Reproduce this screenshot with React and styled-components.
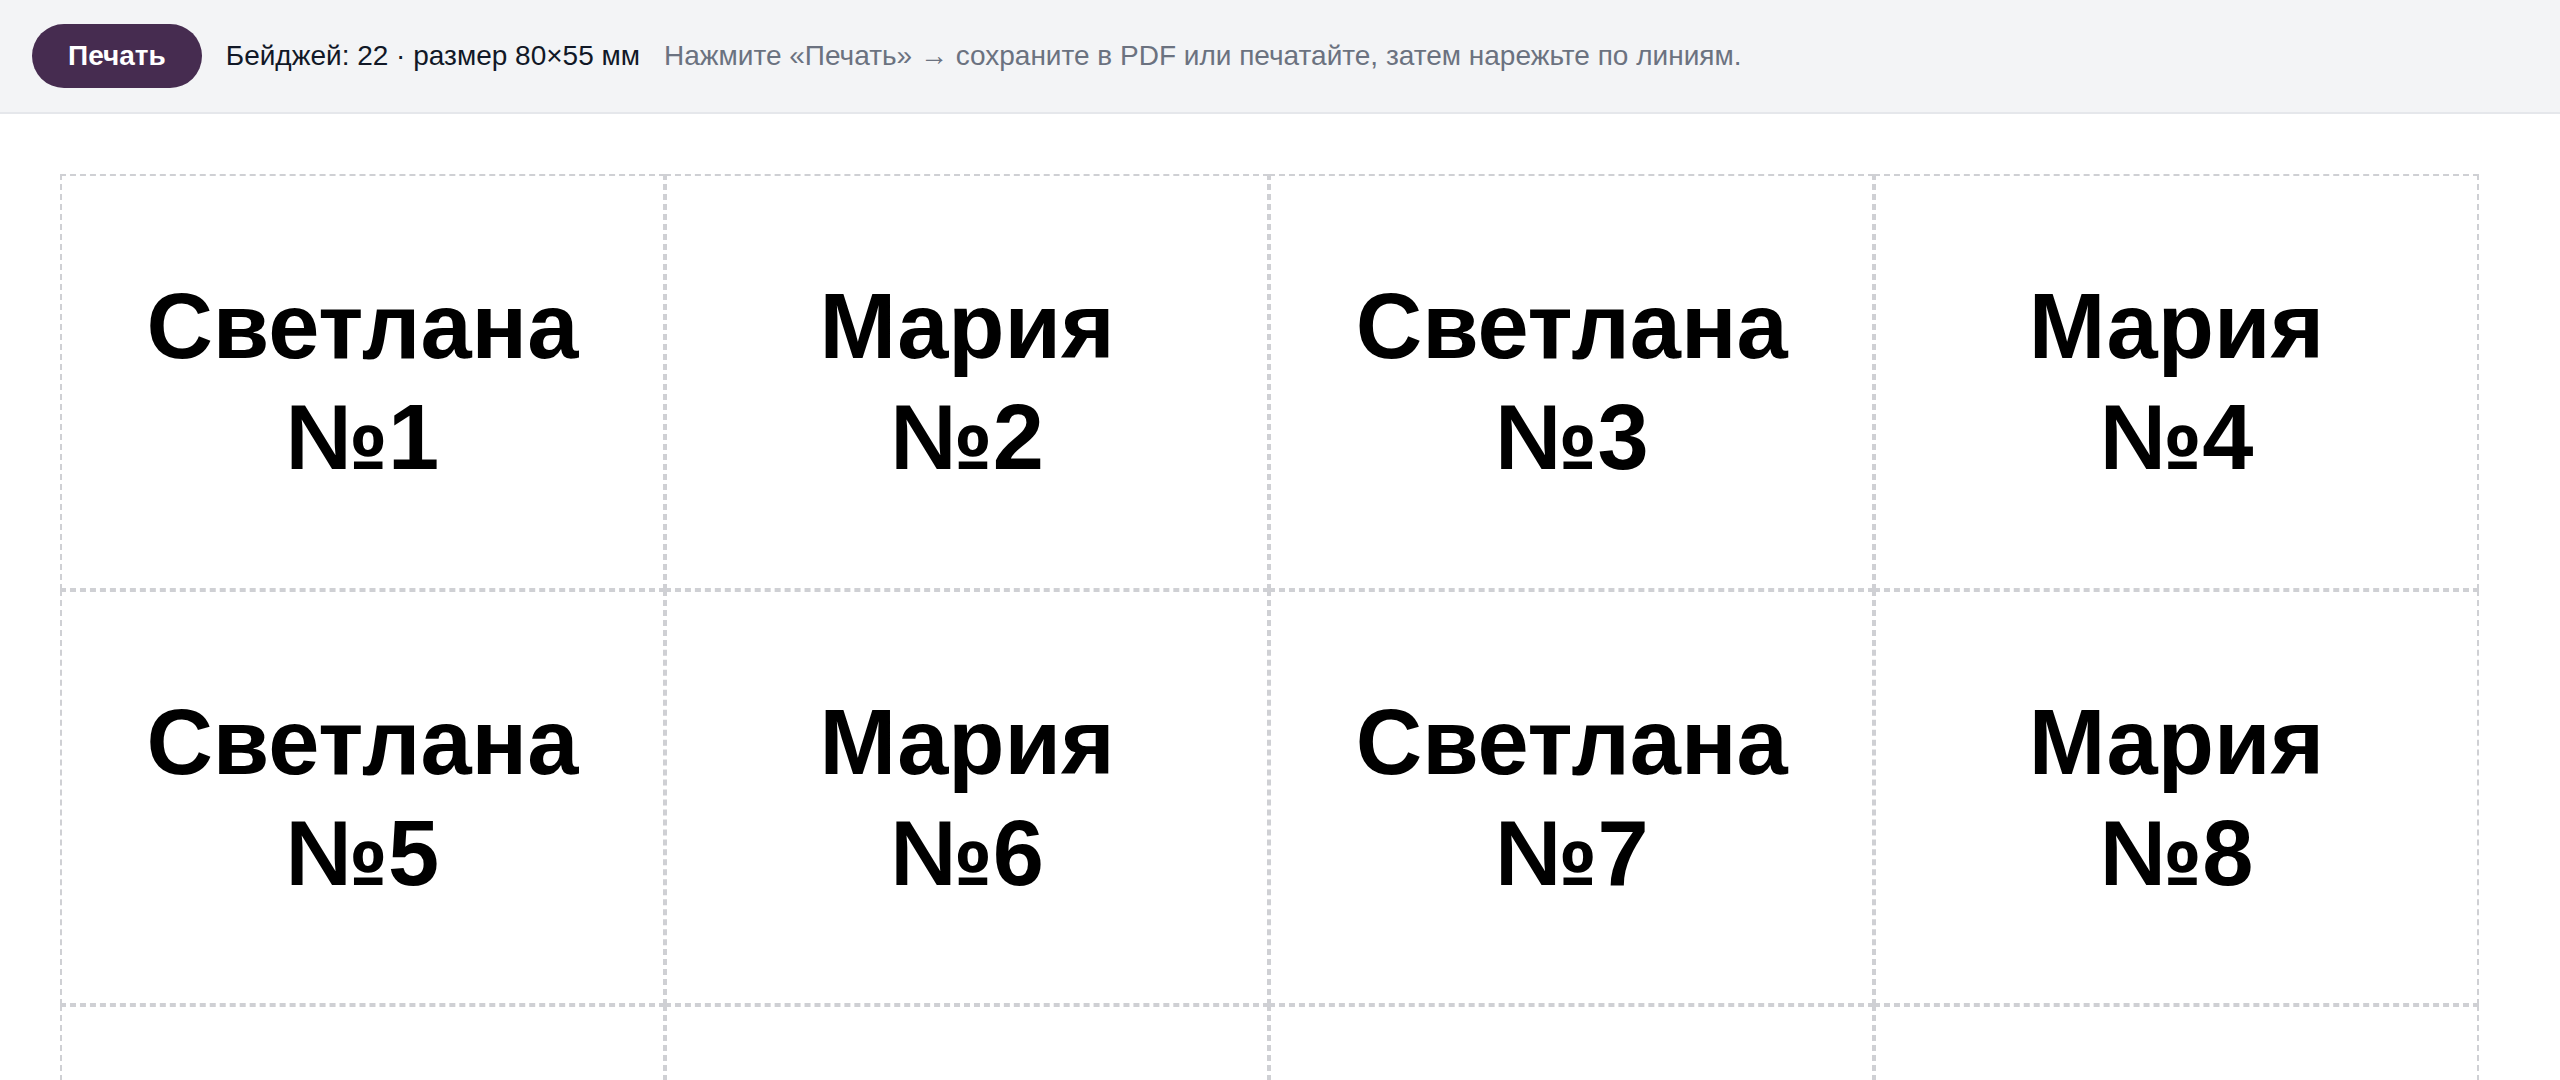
import React from "react";
import styled, { createGlobalStyle } from "styled-components";

const GlobalStyle = createGlobalStyle`
  html, body {
    margin: 0;
    padding: 0;
    background: #ffffff;
    font-family: "Liberation Sans", Arial, sans-serif;
    color: #111827;
  }
  * { box-sizing: border-box; }
`;

const Toolbar = styled.div`
  display: flex;
  align-items: center;
  gap: 24px;
  padding: 24px 32px;
  background: #f3f4f6;
  border-bottom: 2px solid #e5e7eb;
`;

const PrintButton = styled.button`
  font-family: "Liberation Sans", Arial, sans-serif;
  font-weight: 700;
  font-size: 28px;
  line-height: 32px;
  color: #ffffff;
  background: #462c50;
  border: none;
  border-radius: 999px;
  padding: 16px 36px;
  cursor: pointer;
`;

const Info = styled.span`
  font-size: 28px;
  color: ${(p) => (p.$muted ? "#6b7280" : "#111827")};
`;

const Sheet = styled.div`
  display: flex;
  flex-wrap: wrap;
  padding: 60px;
`;

const Badge = styled.div`
  width: 160mm;
  height: 110mm;
  border: 2px dashed #cfd0d4;
  display: flex;
  flex-direction: column;
  align-items: center;
  justify-content: center;
  text-align: center;
  font-weight: 700;
  font-size: 92px;
  line-height: 1.2;
  color: #000000;
`;

const Line = styled.div``;

const badges = Array.from({ length: 22 }, (_, i) => ({
  name: i % 2 === 0 ? "Светлана" : "Мария",
  num: i + 1,
}));

export default function App() {
  return (
    <>
      <GlobalStyle />
      <Toolbar>
        <PrintButton>Печать</PrintButton>
        <Info>Бейджей: 22 · размер 80×55 мм</Info>
        <Info $muted>Нажмите «Печать» → сохраните в PDF или печатайте, затем нарежьте по линиям.</Info>
      </Toolbar>
      <Sheet>
        {badges.map((b) => (
          <Badge key={b.num}>
            <Line>{b.name}</Line>
            <Line>№{b.num}</Line>
          </Badge>
        ))}
      </Sheet>
    </>
  );
}
